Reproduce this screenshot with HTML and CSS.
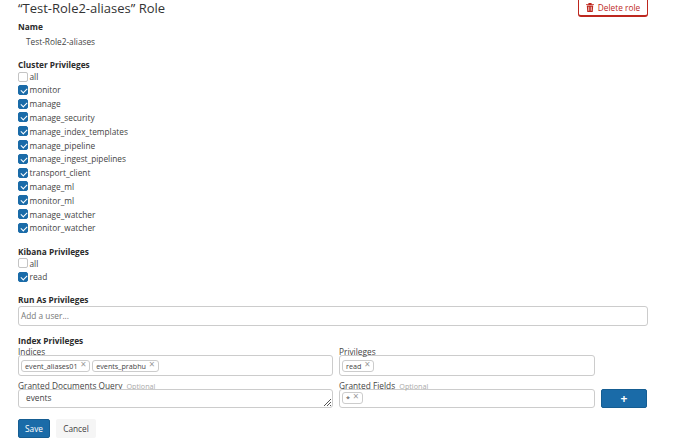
FILE: index.html

```html
<!DOCTYPE html>
<html lang="en">
<head>
  <meta charset="UTF-8" />
  <title>Role</title>
  <link rel="stylesheet" href="styles.css">
</head>
<body>
  <div class="page">
    <div class="page-header">
      <h1>“Test-Role2-aliases” Role</h1>
      <button class="btn-delete">
        <svg width="8" height="9" viewBox="0 0 10 11"><path fill="#bd271e" d="M1 3h8l-.6 8H1.6zM0 1.3h3V0h4v1.3h3v1.2H0z"/><path fill="#fff" d="M3 4.5h1v5H3zM6 4.5h1v5H6z"/></svg>
        Delete role
      </button>
    </div>

    <div class="section name-section">
      <div class="section-title">Name</div>
      <div class="name-value">Test-Role2-aliases</div>
    </div>

    <div class="section cluster">
      <div class="section-title">Cluster Privileges</div>
      <label class="check"><span class="box"></span>all</label>
      <label class="check"><span class="box on"></span>monitor</label>
      <label class="check"><span class="box on"></span>manage</label>
      <label class="check"><span class="box on"></span>manage_security</label>
      <label class="check"><span class="box on"></span>manage_index_templates</label>
      <label class="check"><span class="box on"></span>manage_pipeline</label>
      <label class="check"><span class="box on"></span>manage_ingest_pipelines</label>
      <label class="check"><span class="box on"></span>transport_client</label>
      <label class="check"><span class="box on"></span>manage_ml</label>
      <label class="check"><span class="box on"></span>monitor_ml</label>
      <label class="check"><span class="box on"></span>manage_watcher</label>
      <label class="check"><span class="box on"></span>monitor_watcher</label>
    </div>

    <div class="section kibana">
      <div class="section-title">Kibana Privileges</div>
      <label class="check"><span class="box"></span>all</label>
      <label class="check"><span class="box on"></span>read</label>
    </div>

    <div class="section run-as">
      <div class="section-title">Run As Privileges</div>
      <div class="input placeholder">Add a user...</div>
    </div>

    <div class="section index">
      <div class="section-title">Index Privileges</div>
      <div class="index-grid">
        <div class="field">
          <div class="field-label">Indices</div>
          <div class="input tags">
            <span class="tag">event_aliases01<i>×</i></span>
            <span class="tag">events_prabhu<i>×</i></span>
          </div>
        </div>
        <div class="field">
          <div class="field-label">Privileges</div>
          <div class="input tags"><span class="tag">read<i>×</i></span></div>
        </div>
        <div></div>
        <div class="field">
          <div class="field-label">Granted Documents Query <small>Optional</small></div>
          <div class="input query">events
            <svg class="grip" width="7" height="7" viewBox="0 0 7 7"><path stroke="#555" fill="none" d="M0 7l7-7M3 7l4-4M6 7l1-1"/></svg>
          </div>
        </div>
        <div class="field">
          <div class="field-label">Granted Fields <small>Optional</small></div>
          <div class="input tags lower"><span class="tag">*<i>×</i></span></div>
        </div>
        <button class="btn-add">+</button>
      </div>
    </div>

    <div class="actions">
      <button class="btn-save">Save</button>
      <button class="btn-cancel">Cancel</button>
    </div>
  </div>
</body>
</html>
```

FILE: styles.css

```css
* {
  box-sizing: border-box;
}

html, body {
  height: 100%;
}

body {
  margin: 0;
  background: white;
  color: #444;
  font-family: "Open Sans", sans-serif;
  font-size: 8.3px;
  overflow: hidden;
}

.page {
  width: 630px;
  margin-left: 18px;
}

.page-header {
  display: flex;
  justify-content: space-between;
  height: 17px;
}

h1 {
  margin: 0;
  font-size: 13px;
  font-weight: 400;
  line-height: 17px;
  color: #333;
}

.btn-delete {
  display: flex;
  align-items: center;
  justify-content: center;
  gap: 4px;
  width: 70px;
  height: 17px;
  padding: 0;
  background: white;
  border: 1px solid #bd271e;
  border-top: none;
  border-bottom-width: 2px;
  border-radius: 0 0 3px 3px;
  color: #bd271e;
  font: 8.3px "Open Sans", sans-serif;
}

.section-title {
  font-weight: 700;
  line-height: 10px;
  color: #2b2b2b;
}

.name-section {
  margin-top: 5px;
}

.name-value {
  margin-top: 4px;
  padding-left: 8px;
  line-height: 12px;
}

.cluster {
  margin-top: 12px;
}

.check {
  display: flex;
  align-items: center;
  gap: 1.5px;
  height: 13.8px;
}

.check:first-of-type {
  height: 13px;
}

.box {
  position: relative;
  width: 10px;
  height: 10px;
  border: 1px solid #c4c4c4;
  border-radius: 2px;
  background: white;
}

.box.on {
  background: #1a6ba8;
  border-color: #1a6ba8;
}

.box.on::after {
  content: "";
  position: absolute;
  left: 2.5px;
  top: 1px;
  width: 3px;
  height: 5px;
  border: solid white;
  border-width: 0 1.4px 1.4px 0;
  transform: rotate(45deg);
}

.kibana {
  margin-top: 12px;
}

.run-as {
  margin-top: 11.2px;
}

.run-as .section-title {
  margin-bottom: 1px;
}

.input {
  border: 1px solid #ccc;
  border-radius: 3px;
  background: white;
  height: 20.5px;
  width: 100%;
}

.placeholder {
  padding: 0 2px;
  line-height: 18px;
  color: #777;
  font-size: 8.3px;
}

.index {
  margin-top: 9px;
}

.index .section-title {
  margin-bottom: 1px;
  line-height: 11px;
}

.index-grid {
  display: grid;
  grid-template-columns: 315px 256px 46px;
  column-gap: 6px;
  row-gap: 5px;
}

.field-label {
  margin-bottom: -1px;
  line-height: 9px;
  color: #444;
}

.field-label small {
  margin-left: 2px;
  font-size: 7.2px;
  color: #aaa;
}

.tags {
  display: flex;
  align-items: center;
  gap: 2px;
  padding-left: 2px;
}

.tag {
  display: inline-flex;
  align-items: center;
  height: 12px;
  padding: 0 3px;
  border: 1px solid #ccc;
  border-radius: 3px;
  font-size: 7.2px;
}

.tag i {
  margin-left: 3px;
  margin-top: -3px;
  font-size: 10px;
  line-height: 8px;
  font-style: normal;
  color: #999;
}

.query {
  position: relative;
  height: 19px;
  margin-top: -2px;
  padding-left: 7px;
  line-height: 15px;
}

.lower {
  height: 19px;
  margin-top: -2px;
  padding-bottom: 1px;
}

.grip {
  position: absolute;
  right: 1px;
  bottom: 1px;
}

.btn-add {
  align-self: end;
  height: 18.5px;
  padding: 0;
  background: #1a6ba8;
  border: 1px solid #155d92;
  border-radius: 2px;
  color: white;
  font: 700 12px/1 "Open Sans", sans-serif;
}

.actions {
  display: flex;
  gap: 6px;
  margin-top: 11px;
}

.btn-save {
  width: 32px;
  height: 19px;
  padding: 0;
  background: #1a6ba8;
  border: 1px solid #155d92;
  border-radius: 2px;
  color: white;
  font: 8.3px "Open Sans", sans-serif;
}

.btn-cancel {
  width: 40px;
  height: 19px;
  padding: 0;
  background: #f5f5f5;
  border: none;
  border-radius: 2px;
  color: #444;
  font: 8.3px "Open Sans", sans-serif;
}
```
